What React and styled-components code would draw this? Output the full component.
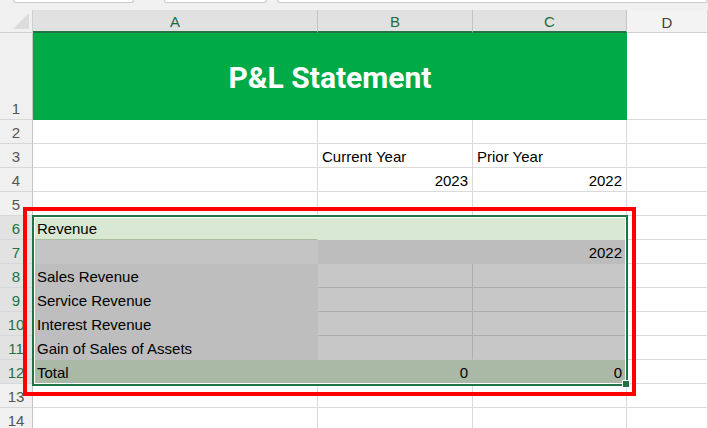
import React from 'react';
import styled, { createGlobalStyle } from 'styled-components';

const GlobalStyle = createGlobalStyle`
  html, body {
    margin: 0;
    padding: 0;
    background: #ffffff;
    overflow: hidden;
  }
  * {
    box-sizing: border-box;
  }
`;

const Page = styled.div`
  position: relative;
  width: 708px;
  height: 428px;
  overflow: hidden;
  font-family: 'Liberation Sans', Arial, sans-serif;
`;

// strip of formula bar / name box bottoms above the grid
const TopStrip = styled.div`
  display: flex;
  align-items: flex-start;
  height: 10px;
  padding-left: 13px;
  background: #f0f0f0;
`;

const TabEdge = styled.div`
  width: ${(p) => (p.$w ? `${p.$w}px` : 'auto')};
  flex: ${(p) => (p.$w ? 'none' : '1')};
  margin-right: ${(p) => p.$gap || 0}px;
  height: 3px;
  background: #ffffff;
  border: 1px solid #c9c9c9;
  border-top: none;
  border-radius: 0 0 4px 4px;
`;

const Sheet = styled.div`
  display: grid;
  grid-template-columns: 33px 285px 155px 154px 1fr;
  grid-template-rows: 23px 87px repeat(13, 24px);
`;

const Corner = styled.div`
  position: relative;
  background: #f0f0f0;
  border-right: 1px solid #d0d0d0;
  border-bottom: 1px solid #d0d0d0;

  &::after {
    content: '';
    position: absolute;
    right: 3px;
    bottom: 3px;
    width: 0;
    height: 0;
    border-left: 16px solid transparent;
    border-bottom: 16px solid #dcdcdc;
  }
`;

const ColHead = styled.div`
  display: flex;
  align-items: center;
  justify-content: center;
  padding-top: 2px;
  background: ${(p) => (p.$sel ? '#e1e1e1' : '#f3f3f3')};
  border-right: 1px solid ${(p) => (p.$sel ? '#c4c4c4' : '#d6d6d6')};
  border-bottom: ${(p) => (p.$sel ? '2px solid #217346' : '1px solid #d0d0d0')};
  color: ${(p) => (p.$sel ? '#1d6b40' : '#3f3f3f')};
  font-size: 15px;
`;

const RowHead = styled.div`
  display: flex;
  align-items: flex-end;
  justify-content: center;
  background: ${(p) => (p.$sel ? '#e2e2e2' : '#f0f0f0')};
  border-right: 1px solid #c6c6c6;
  border-bottom: 1px solid #d8d8d8;
  color: ${(p) => (p.$sel ? '#217346' : '#555555')};
  font-size: 15px;
  line-height: 20px;
`;

const Cell = styled.div`
  display: flex;
  align-items: flex-end;
  justify-content: ${(p) => (p.$right ? 'flex-end' : 'flex-start')};
  padding: 0 4px;
  background: ${(p) => p.$fill || '#ffffff'};
  border-right: 1px solid ${(p) => p.$v || '#dadada'};
  border-bottom: 1px solid ${(p) => p.$h || '#dadada'};
  color: #000000;
  font-size: 15px;
  line-height: 20px;
  white-space: nowrap;
  overflow: hidden;
`;

const TitleCell = styled.div`
  grid-column: span 3;
  display: flex;
  align-items: center;
  justify-content: center;
  background: #00ab47;
  color: #ffffff;
  font-family: Roboto, 'Liberation Sans', Arial, sans-serif;
  font-weight: 700;
  font-size: 30px;
  padding-top: 2px;
`;

// red annotation frame drawn over the sheet
const RedFrame = styled.div`
  position: absolute;
  left: 23px;
  top: 207px;
  width: 613px;
  height: 189px;
  border: 4px solid #ff0000;
  pointer-events: none;
`;

// excel selection outline with fill handle
const Selection = styled.div`
  position: absolute;
  left: 32px;
  top: 215px;
  width: 596px;
  height: 171px;
  border: 2px solid #217346;
  box-shadow: inset 0 0 0 1px #ffffff;
  pointer-events: none;
`;

const FillHandle = styled.div`
  position: absolute;
  left: 622px;
  top: 380px;
  width: 8px;
  height: 8px;
  background: #217346;
  border: 1px solid #ffffff;
`;

const rowSpecs = [
  { n: 2 },
  { n: 3, cells: [{}, { t: 'Current Year' }, { t: 'Prior Year' }, {}] },
  { n: 4, cells: [{}, { t: '2023', right: true }, { t: '2022', right: true }, {}] },
  { n: 5 },
  {
    n: 6,
    sel: true,
    cells: [
      { t: 'Revenue', fill: '#d9e8d2', v: '#d9e8d2', h: '#a9bea0' },
      { fill: '#d9e8d2', v: '#d9e8d2', h: '#d9e8d2' },
      { fill: '#d9e8d2', v: '#d9e8d2', h: '#d9e8d2' },
      {},
    ],
  },
  {
    n: 7,
    sel: true,
    cells: [
      { fill: '#c4c4c4', v: '#c4c4c4', h: '#c4c4c4' },
      { fill: '#bdbdbd', v: '#bdbdbd', h: '#bdbdbd' },
      { t: '2022', right: true, fill: '#bdbdbd', v: '#bdbdbd', h: '#bdbdbd' },
      {},
    ],
  },
  ...['Sales Revenue', 'Service Revenue', 'Interest Revenue', 'Gain of Sales of Assets'].map(
    (label, i) => {
      const last = i === 3;
      return {
        n: 8 + i,
        sel: true,
        cells: [
          { t: label, fill: '#bebebe', v: '#bebebe', h: '#bebebe' },
          { fill: '#c7c7c7', v: '#adadad', h: last ? '#c7c7c7' : '#adadad' },
          { fill: '#c7c7c7', v: '#c7c7c7', h: last ? '#c7c7c7' : '#adadad' },
          {},
        ],
      };
    }
  ),
  {
    n: 12,
    sel: true,
    cells: [
      { t: 'Total', fill: '#aab8a6', v: '#aab8a6', h: '#aab8a6' },
      { t: '0', right: true, fill: '#aab8a6', v: '#aab8a6', h: '#aab8a6' },
      { t: '0', right: true, fill: '#aab8a6', v: '#aab8a6', h: '#aab8a6' },
      {},
    ],
  },
  { n: 13 },
  { n: 14 },
];

const blank = [{}, {}, {}, {}];

const App = () => (
  <>
    <GlobalStyle />
    <Page>
      <TopStrip>
        <TabEdge $w={121} $gap={30} />
        <TabEdge $w={103} $gap={10} />
        <TabEdge />
      </TopStrip>
      <Sheet>
        <Corner />
        <ColHead $sel>A</ColHead>
        <ColHead $sel>B</ColHead>
        <ColHead $sel>C</ColHead>
        <ColHead>D</ColHead>

        <RowHead>1</RowHead>
        <TitleCell>P&amp;L Statement</TitleCell>
        <Cell />

        {rowSpecs.map((row) => (
          <React.Fragment key={row.n}>
            <RowHead $sel={row.sel}>{row.n}</RowHead>
            {(row.cells || blank).map((c, i) => (
              <Cell key={i} $fill={c.fill} $v={c.v} $h={c.h} $right={c.right}>
                {c.t}
              </Cell>
            ))}
          </React.Fragment>
        ))}
      </Sheet>
      <RedFrame />
      <Selection />
      <FillHandle />
    </Page>
  </>
);

export default App;
